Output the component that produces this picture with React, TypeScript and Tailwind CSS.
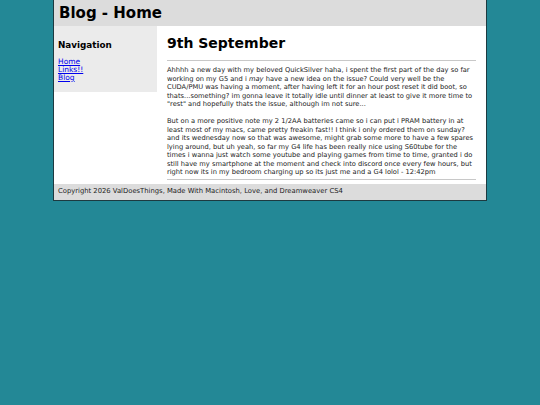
const para1 = [
  'Ahhhh a new day with my beloved QuickSilver haha, i spent the first part of the day so far',
  'working on my G5 and i |may| have a new idea on the issue? Could very well be the',
  'CUDA/PMU was having a moment, after having left it for an hour post reset it did boot, so',
  'thats...something? im gonna leave it totally idle until dinner at least to give it more time to',
  '"rest" and hopefully thats the issue, although im not sure...',
];

const para2 = [
  'But on a more positive note my 2 1/2AA batteries came so i can put i PRAM battery in at',
  'least most of my macs, came pretty freakin fast!! I think i only ordered them on sunday?',
  'and its wednesday now so that was awesome, might grab some more to have a few spares',
  'lying around, but uh yeah, so far my G4 life has been really nice using S60tube for the',
  'times i wanna just watch some youtube and playing games from time to time, granted i do',
  'still have my smartphone at the moment and check into discord once every few hours, but',
  'right now its in my bedroom charging up so its just me and a G4 lolol - 12:42pm',
];

function Line({ text }: { text: string }) {
  // |word| marks italic
  const parts = text.split('|');
  return (
    <span className="block whitespace-nowrap">
      {parts.map((p, i) => (i % 2 === 1 ? <em key={i}>{p}</em> : <span key={i}>{p}</span>))}
    </span>
  );
}

export default function App() {
  return (
    <div className="min-h-[405px] w-[540px] bg-[#238896]" style={{ fontFamily: '"DejaVu Sans", Verdana, sans-serif' }}>
      <div className="mx-auto w-[434px] border border-t-0 border-[#1d3a40] bg-white">
        {/* header */}
        <div className="flex h-[26px] items-center bg-[#dcdcdc] px-[5px]">
          <h1 className="text-[15px] font-bold leading-none text-black">Blog - Home</h1>
        </div>

        <div className="flex">
          {/* sidebar */}
          <div className="w-[103px] self-start bg-[#ebebeb] px-[4px] pb-[10px] pt-[15px]">
            <h2 className="text-[8.8px] font-bold leading-none text-black">Navigation</h2>
            <ul className="mt-[8px] text-[7.5px] leading-[8px]">
              <li><a href="#" className="text-[#0000ee] underline">Home</a></li>
              <li><a href="#" className="text-[#0000ee] underline">Links!!</a></li>
              <li><a href="#" className="text-[#0000ee] underline">Blog</a></li>
            </ul>
          </div>

          {/* content */}
          <div className="min-w-0 flex-1 px-[10px] pb-[4px] pt-[10px]">
            <h1 className="text-[14px] font-bold leading-none text-black">9th September</h1>
            <hr className="mt-[10px] border-t border-[#c8c8c8]" />
            <div className="mt-[5px] text-[6.7px] leading-[8.5px] text-[#222]">
              <p>
                {para1.map((l, i) => <Line key={i} text={l} />)}
              </p>
              <p className="mt-[8.5px]">
                {para2.map((l, i) => <Line key={i} text={l} />)}
              </p>
            </div>
            <hr className="mt-[2px] border-t border-[#c8c8c8]" />
          </div>
        </div>

        {/* footer */}
        <div className="flex h-[16px] items-center bg-[#dcdcdc] px-[4px]">
          <p className="text-[6.8px] leading-none text-[#222]">Copyright 2026 ValDoesThings, Made With Macintosh, Love, and Dreamweaver CS4</p>
        </div>
      </div>
    </div>
  );
}
